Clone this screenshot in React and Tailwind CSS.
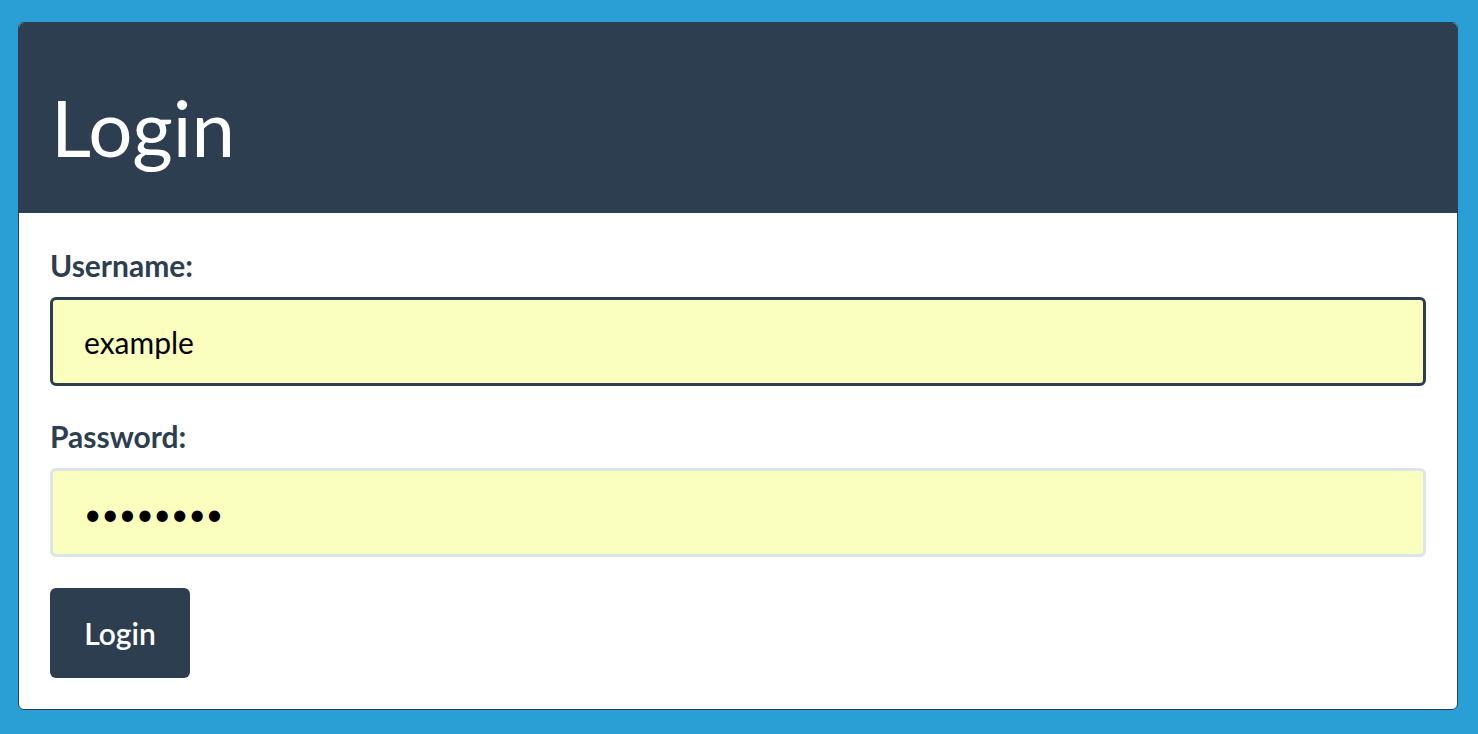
import React from 'react';

const Field = ({ label, type, value, focused, className }) => (
  <div className={className}>
    <label className="block text-[30px] leading-[36px] font-bold text-[#2c3e50] mb-[14px]">
      {label}
    </label>
    <input
      type={type}
      defaultValue={value}
      readOnly
      className={
        'block w-full h-[89px] rounded-[6px] border-[3px] bg-[#faffbd] pl-[31px] pr-4 text-[30px] text-black outline-none ' +
        (focused ? 'border-[#2c3e50]' : 'border-[#dce4ec]')
      }
      style={{ fontFamily: 'Lato, "Noto Sans", sans-serif' }}
    />
  </div>
);

const App = () => {
  return (
    <div
      className="min-h-screen bg-[#2a9fd6] pt-[22px] pl-[18px] pb-[25px]"
      style={{ fontFamily: 'Lato, "Noto Sans", sans-serif' }}
    >
      <div className="w-[1440px] rounded-[6px] border border-[#2c3e50] bg-white overflow-hidden">
        <div className="bg-[#2c3e50] px-[32px] pt-[60px] pb-[42px]">
          <h1 className="text-[78px] leading-[88px] font-normal text-white">Login</h1>
        </div>

        <form className="px-[31px] pt-[34px] pb-[31px]">
          <Field label="Username:" type="text" value="example" focused className="mb-[32px]" />
          <Field label="Password:" type="password" value="password" className="mb-[31px]" />
          <button
            type="button"
            className="h-[90px] w-[140px] rounded-[6px] bg-[#2c3e50] text-[30px] font-semibold text-white"
          >
            Login
          </button>
        </form>
      </div>
    </div>
  );
};

export default App;
